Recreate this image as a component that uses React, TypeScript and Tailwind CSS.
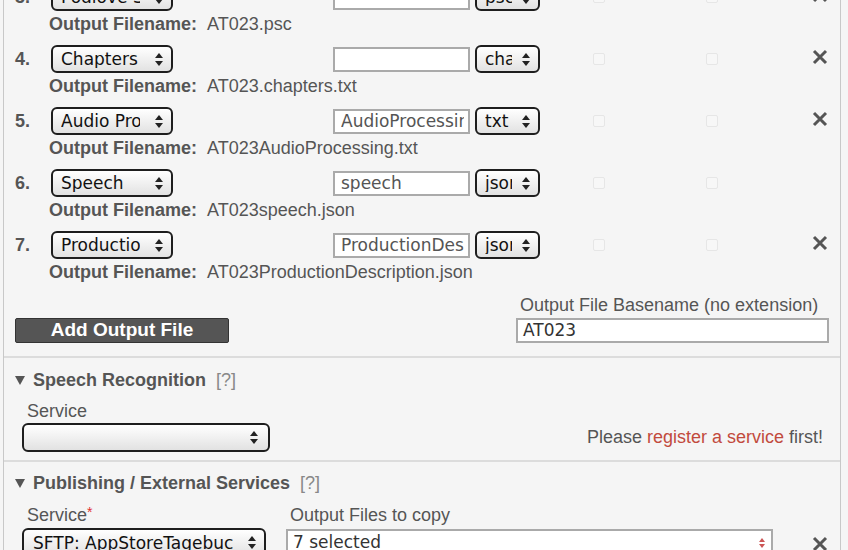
import React from "react";

const SANS = { fontFamily: '"Liberation Sans", Arial, Helvetica, sans-serif' };
const UI = { fontFamily: '"DejaVu Sans", "Liberation Sans", sans-serif' };

function Arrows({ color = "#222" }: { color?: string }) {
  return (
    <svg width="8" height="13" viewBox="0 0 8 13" className="shrink-0">
      <polygon points="4,0 8,5 0,5" fill={color} />
      <polygon points="0,8 8,8 4,13" fill={color} />
    </svg>
  );
}

function Select({ text, className, gap = "ml-[12px]" }: { text: string; className: string; gap?: string }) {
  return (
    <div
      className={`flex items-center border-2 border-[#1e1e1e] rounded-[6px] bg-linear-to-b from-white to-[#e2e2e2] pl-[8px] pr-[8px] shrink-0 ${className}`}
    >
      <div className="flex-1 min-w-0 overflow-hidden whitespace-nowrap text-[17px] text-[#111] leading-none pt-[1px]" style={UI}>
        {text}
      </div>
      <div className={gap}>
        <Arrows />
      </div>
    </div>
  );
}

function XIcon() {
  return (
    <svg width="16" height="16" viewBox="0 0 16 16" className="shrink-0">
      <path d="M2 2 L14 14 M14 2 L2 14" stroke="#555" strokeWidth="3" />
    </svg>
  );
}

function Checkbox() {
  return <div className="w-[12px] h-[12px] border border-[#e6e6e6] rounded-[2px] bg-[#f7f7f7] shrink-0" />;
}

type Row = { n: number; name: string; input: string; ext: string; file: string; x: boolean };

const rows: Row[] = [
  { n: 3, name: "Podlove Simple Chapters", input: "", ext: "psc", file: "AT023.psc", x: true },
  { n: 4, name: "Chapters", input: "", ext: "chapters", file: "AT023.chapters.txt", x: true },
  { n: 5, name: "Audio Processing", input: "AudioProcessing", ext: "txt", file: "AT023AudioProcessing.txt", x: true },
  { n: 6, name: "Speech", input: "speech", ext: "json", file: "AT023speech.json", x: false },
  { n: 7, name: "ProductionDescription", input: "ProductionDescription", ext: "json", file: "AT023ProductionDescription.json", x: true },
];

function OutputRow({ r }: { r: Row }) {
  return (
    <div className="mb-[8px]">
      <div className="flex items-center h-[28px]">
        <div className="w-[36px] text-[18px] font-bold text-[#555]" style={SANS}>
          {r.n}.
        </div>
        <Select text={r.name} className="w-[122px] h-[28px]" gap="ml-[15px]" />
        <div className="ml-[160px] w-[137px] h-[25px] border-2 border-[#aaa] bg-white flex items-center pl-[6px] pr-[4px]">
          <div className="flex-1 min-w-0 overflow-hidden whitespace-nowrap text-[17px] text-[#555] leading-none pt-[1px]" style={UI}>
            {r.input}
          </div>
        </div>
        <Select text={r.ext} className="ml-[5px] w-[65px] h-[28px]" gap="ml-[10px]" />
        <div className="ml-[53px]">
          <Checkbox />
        </div>
        <div className="ml-[101px]">
          <Checkbox />
        </div>
        {r.x && (
          <div className="ml-[94px] mb-[4px]">
            <XIcon />
          </div>
        )}
      </div>
      <div className="h-[26px] flex items-center pl-[34px] text-[18px] text-[#555] whitespace-nowrap" style={SANS}>
        <span className="font-bold">Output Filename:</span>
        <span className="ml-[10px]">{r.file}</span>
      </div>
    </div>
  );
}

function Triangle() {
  return (
    <svg width="10" height="9" viewBox="0 0 10 9" className="shrink-0">
      <polygon points="0,0 10,0 5,9" fill="#555" />
    </svg>
  );
}

function Heading({ title }: { title: string }) {
  return (
    <div className="h-[24px] flex items-center text-[18px] text-[#555]" style={SANS}>
      <Triangle />
      <span className="ml-[8px] font-bold">{title}</span>
      <span className="ml-[10px] text-[#888]">[?]</span>
    </div>
  );
}

export default function App() {
  return (
    <div className="w-[848px] h-[550px] overflow-hidden bg-[#f5f5f5]">
      <div className="ml-[3px] w-[838px] border-x border-[#c8c8c8] bg-[#f5f5f5] h-[600px]">
        {/* Output files */}
        <div className="border-b-2 border-[#dcdcdc] px-[11px] pb-[13px] mt-[-17px]">
          {rows.map((r) => (
            <OutputRow key={r.n} r={r} />
          ))}
          <div className="flex items-end justify-between">
            <div
              className="w-[214px] h-[25px] bg-[#555] border border-[#333] rounded-[2px] flex items-center justify-center text-white font-bold text-[19px]"
              style={SANS}
            >
              Add Output File
            </div>
            <div className="flex flex-col w-[313px]">
              <div className="h-[24px] flex items-center pl-[4px] text-[18px] text-[#555] whitespace-nowrap" style={SANS}>
                Output File Basename (no extension)
              </div>
              <div className="mt-[1px] h-[25px] border-2 border-[#aaa] bg-white flex items-center pl-[5px] text-[17px] text-[#333]" style={UI}>
                AT023
              </div>
            </div>
          </div>
        </div>

        {/* Speech Recognition */}
        <div className="border-b-2 border-[#dcdcdc] pl-[11px] pr-[17px] pt-[10px] pb-[8px]">
          <Heading title="Speech Recognition" />
          <div className="mt-[8px] pl-[7px] flex items-end justify-between">
            <div>
              <div className="h-[22px] flex items-center pl-[5px] text-[18px] text-[#555]" style={SANS}>
                Service
              </div>
              <Select text="" className="mt-[1px] w-[248px] h-[29px] pr-[10px]" />
            </div>
            <div className="h-[29px] flex items-center text-[18px] text-[#555] whitespace-nowrap" style={SANS}>
              Please&nbsp;<span className="text-[#c24a3d]">register a service</span>&nbsp;first!
            </div>
          </div>
        </div>

        {/* Publishing */}
        <div className="pl-[11px] pt-[9px]">
          <Heading title="Publishing / External Services" />
          <div className="mt-[9px] pl-[7px] flex items-start">
            <div>
              <div className="h-[22px] flex items-center pl-[5px] text-[18px] text-[#555]" style={SANS}>
                Service<span className="text-[#e03030] self-start mt-[-2px] text-[14px]">*</span>
              </div>
              <Select text="SFTP: AppStoreTagebuch" className="mt-[2px] w-[244px] h-[29px] pl-[9px]" gap="ml-[14px]" />
            </div>
            <div className="ml-[20px]">
              <div className="h-[22px] flex items-center pl-[4px] text-[18px] text-[#555] whitespace-nowrap" style={SANS}>
                Output Files to copy
              </div>
              <div className="mt-[3px] w-[487px] h-[28px] border-2 border-[#aaa] bg-white flex items-center pl-[5px] pr-[6px] text-[17px] text-[#333]" style={UI}>
                <span className="flex-1">7 selected</span>
                <svg width="6" height="10" viewBox="0 0 6 10">
                  <polygon points="3,0 6,4 0,4" fill="#c55" />
                  <polygon points="0,6 6,6 3,10" fill="#c55" />
                </svg>
              </div>
            </div>
            <div className="ml-[39px] mt-[32px]">
              <XIcon />
            </div>
          </div>
        </div>
      </div>
    </div>
  );
}
